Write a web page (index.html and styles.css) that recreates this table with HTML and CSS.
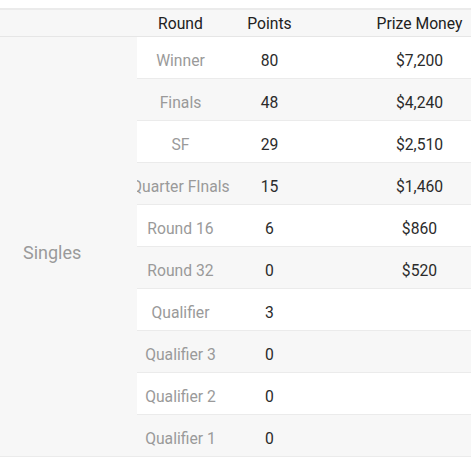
FILE: index.html
```html
<!DOCTYPE html>
<html>
<head>
<meta charset="utf-8">
<link rel="stylesheet" href="styles.css">
</head>
<body>
<div class="wrap">
<table class="prize">
  <colgroup>
    <col class="c-event">
    <col class="c-round">
    <col class="c-points">
    <col class="c-money">
  </colgroup>
  <thead>
    <tr>
      <th class="event"></th>
      <th>Round</th>
      <th>Points</th>
      <th>Prize Money</th>
    </tr>
  </thead>
  <tbody>
    <tr>
      <td class="event" rowspan="10">Singles</td>
      <td class="round">Winner</td>
      <td class="num">80</td>
      <td class="num">$7,200</td>
    </tr>
    <tr class="alt">
      <td class="round">Finals</td>
      <td class="num">48</td>
      <td class="num">$4,240</td>
    </tr>
    <tr>
      <td class="round">SF</td>
      <td class="num">29</td>
      <td class="num">$2,510</td>
    </tr>
    <tr class="alt">
      <td class="round">Quarter FInals</td>
      <td class="num">15</td>
      <td class="num">$1,460</td>
    </tr>
    <tr>
      <td class="round">Round 16</td>
      <td class="num">6</td>
      <td class="num">$860</td>
    </tr>
    <tr class="alt">
      <td class="round">Round 32</td>
      <td class="num">0</td>
      <td class="num">$520</td>
    </tr>
    <tr>
      <td class="round">Qualifier</td>
      <td class="num">3</td>
      <td class="num"></td>
    </tr>
    <tr class="alt">
      <td class="round">Qualifier 3</td>
      <td class="num">0</td>
      <td class="num"></td>
    </tr>
    <tr>
      <td class="round">Qualifier 2</td>
      <td class="num">0</td>
      <td class="num"></td>
    </tr>
    <tr class="alt">
      <td class="round">Qualifier 1</td>
      <td class="num">0</td>
      <td class="num"></td>
    </tr>
  </tbody>
</table>
</div>
</body>
</html>
```
FILE: styles.css
```css
html, body {
  margin: 0;
  padding: 0;
  background: #ffffff;
}

body {
  font-family: Roboto, "Liberation Sans", Arial, sans-serif;
  font-size: 15.7px;
  color: #333333;
}

.wrap {
  width: 471px;
  overflow: hidden;
  padding-top: 8px;
}

.prize {
  table-layout: fixed;
  width: 534px;
  border-collapse: separate;
  border-spacing: 0;
}

.c-event { width: 127px; }
.c-round { width: 107px; }
.c-points { width: 71px; }
.c-money { width: 229px; }

.prize th {
  height: 26px;
  padding: 0;
  font-weight: 400;
  color: #212121;
  background: #f7f7f7;
  border-top: 2px solid #ebebeb;
  border-bottom: 1px solid #e6e6e6;
  text-align: center;
  vertical-align: middle;
  white-space: nowrap;
}

.prize td {
  height: 35px;
  padding: 6px 0 0 0;
  text-align: center;
  vertical-align: middle;
  border-bottom: 1px solid #ebebeb;
  white-space: nowrap;
  background: #ffffff;
}

.prize tr.alt td {
  background: #f7f7f7;
}

.prize td.event {
  position: sticky;
  left: 0;
  z-index: 1;
  background: #f7f7f7;
  color: #9a9a9a;
  font-size: 18px;
  text-align: left;
  padding: 12px 0 0 23px;
}

.prize td.event::after {
  content: "";
  position: absolute;
  top: 0;
  bottom: 1px;
  right: -10px;
  width: 10px;
  background: #f7f7f7;
}

.prize td.round {
  color: #9a9a9a;
}

.prize td.num {
  color: #2b2b2b;
}
```
